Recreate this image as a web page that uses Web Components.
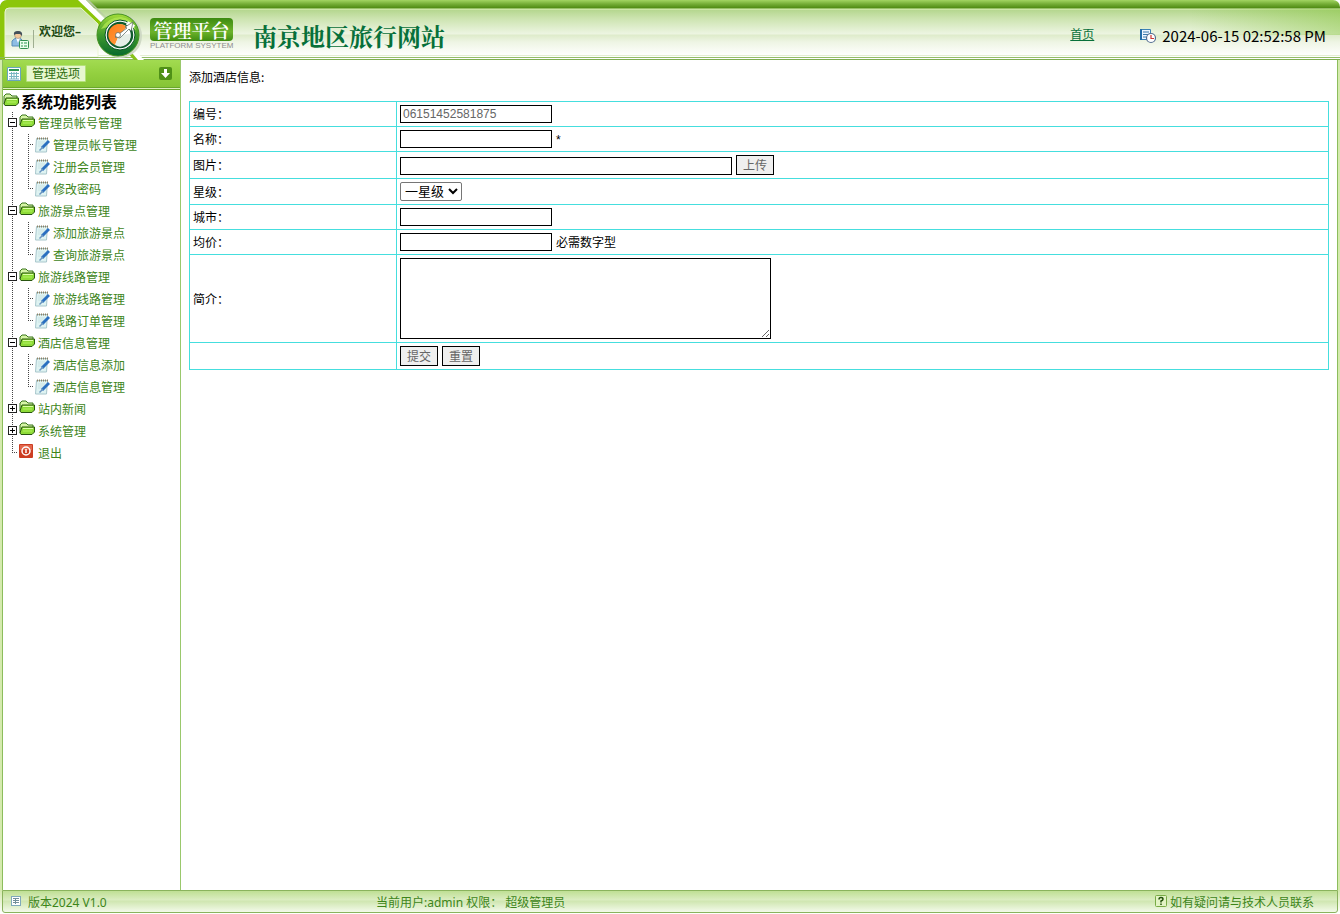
<!DOCTYPE html>
<html lang="zh-CN">
<head>
<meta charset="utf-8">
<title>南京地区旅行网站</title>
<style>
  html, body { margin: 0; height: 100%; }
  body {
    font: 12px/16px "Noto Sans", "Noto Sans CJK SC", sans-serif;
    color: #000;
    background: #fff;
    --leaf: #3d851a;
    --line: #8cbd5c;
    --rim: #d5eaae;
  }
</style>
</head>
<body>
<app-shell>
  <app-header slot="top" user="欢迎您–" heading="南京地区旅行网站" time="2024-06-15 02:52:58 PM"></app-header>
  <side-menu slot="side" heading="系统功能列表">
    <tree-group label="管理员帐号管理" open>
      <tree-item>管理员帐号管理</tree-item>
      <tree-item>注册会员管理</tree-item>
      <tree-item>修改密码</tree-item>
    </tree-group>
    <tree-group label="旅游景点管理" open>
      <tree-item>添加旅游景点</tree-item>
      <tree-item>查询旅游景点</tree-item>
    </tree-group>
    <tree-group label="旅游线路管理" open>
      <tree-item>旅游线路管理</tree-item>
      <tree-item>线路订单管理</tree-item>
    </tree-group>
    <tree-group label="酒店信息管理" open>
      <tree-item>酒店信息添加</tree-item>
      <tree-item>酒店信息管理</tree-item>
    </tree-group>
    <tree-group label="站内新闻"></tree-group>
    <tree-group label="系统管理"></tree-group>
    <tree-group label="退出" kind="exit"></tree-group>
  </side-menu>
  <hotel-form>添加酒店信息:</hotel-form>
  <app-footer slot="bottom">
    <span slot="version">版本2024 V1.0</span>
    <span slot="user">当前用户:admin 权限： 超级管理员</span>
    <span slot="help">如有疑问请与技术人员联系</span>
  </app-footer>
</app-shell>

<script>
const define = (name, markup, setup) => {
  const template = document.createElement('template');
  template.innerHTML = markup;
  customElements.define(name, class extends HTMLElement {
    constructor() {
      super();
      this.attachShadow({ mode: 'open' }).append(template.content.cloneNode(true));
    }
    connectedCallback() { if (setup) setup(this, this.shadowRoot); }
  });
};

define('app-shell', `
<style>
  :host { display: flex; flex-direction: column; min-height: 100vh; }
  .middle {
    flex: 1; display: flex;
    border: solid var(--rim); border-width: 0 2px;
  }
  .inner { flex: 1; display: flex; border: solid var(--line); border-width: 0 1px; }
  aside { flex: none; width: 177px; border-right: 1px solid #9ac86c; }
  main { flex: 1; padding: 9px 8px; }
</style>
<slot name="top"></slot>
<div class="middle"><div class="inner">
  <aside><slot name="side"></slot></aside>
  <main><slot></slot></main>
</div></div>
<slot name="bottom"></slot>`);

define('app-header', `
<style>
  :host { display: block; }
  header {
    display: flex; align-items: center; height: 60px; overflow: hidden;
    border-radius: 7px 7px 0 0;
    background:
      linear-gradient(#e3eed2, #e3eed2) 0 55px / 100% 1px no-repeat,
      linear-gradient(#94bd68, #94bd68) 0 57px / 100% 1px no-repeat,
      linear-gradient(#7fae50, #7fae50) 0 59px / 100% 1px no-repeat,
      linear-gradient(90deg, transparent calc(100% - 150px), rgba(130,195,55,.45)) 0 9px / 100% 26px no-repeat,
      linear-gradient(#a2d562 0, #74ad36 4px, #4f8b13 8px, #e0f5bd 9px, #b5d78f 10px, #cbe3ae 18px, #edf5e2 34px, #deebca 35px, #eef5e4 42px, #fdfefb 54px, #fff 60px);
  }
  .brand { display: grid; flex: none; width: 150px; height: 60px; }
  .brand > * { grid-area: 1 / 1; }
  .welcome { padding: 24px 0 0 39px; font-weight: 700; color: #1d4a12; }
  .badge { width: 83px; padding-top: 8px; text-align: center; }
  .badge b {
    display: block; height: 23px; border-radius: 4px; font: 600 19px/23px "Noto Serif CJK SC", "Noto Sans CJK SC", serif;
    color: #fff; background: linear-gradient(#3c8a10, #6cb32a 60%, #3f8d12);
  }
  .badge small { display: block; font: 8px/10px "Liberation Sans", sans-serif; color: #8d8d8d; white-space: nowrap; }
  h1 { flex: 1; margin: 12px 0 0 20px; font: 700 24px/36px "Noto Serif CJK SC", "Noto Sans CJK SC", serif; color: #07703a; }
  a { margin: 10px 46px 0 0; color: #07703a; }
  time { display: flex; align-items: center; gap: 6px; margin: 12px 14px 0 0; font: 15px/20px "Noto Sans CJK SC", sans-serif; }
  h1, a, .badge, time { white-space: nowrap; }
</style>
<header>
  <div class="brand">
    <svg width="150" height="60" viewBox="0 0 150 60" aria-hidden="true">
      <defs>
        <linearGradient id="panel" x2="0" y2="1">
          <stop offset="0" stop-color="#c0dc9b"/><stop offset=".54" stop-color="#e9f3dc"/>
          <stop offset=".56" stop-color="#dbe9c6"/><stop offset="1" stop-color="#fff"/>
        </linearGradient>
        <linearGradient id="ring" x2="0" y2="1"><stop offset="0" stop-color="#a2dc38"/><stop offset=".5" stop-color="#3f9a2c"/><stop offset="1" stop-color="#07692d"/></linearGradient>
        <linearGradient id="dial" x2="1" y2="1"><stop offset="0" stop-color="#ff7a16"/><stop offset="1" stop-color="#ffa24a"/></linearGradient>
      </defs>
      <path d="M0 60V7Q0 0 7 0H79L104 24 96 42H5V60Z" fill="#8cc60a"/>
      <path d="M5 57V12Q5 8 9 8H81L98 24V57Z" fill="url(#panel)" stroke="#eaf6d3"/>
      <path d="M78 0H86L112 26H105Z" fill="#fff"/><path d="M86 0H89L114 25" fill="#b7c7a5"/>
      <path d="M125 45H131L144 60H137Z" fill="#fff"/><path d="M122 47H127L138 60H134Z" fill="#88c21b"/>
      <circle cx="120" cy="36" r="22" fill="#cfd9c5"/>
      <circle cx="118" cy="35" r="21" fill="url(#ring)" stroke="#459321"/>
      <path d="M101 29Q108 17 121 17 132 18 136 30 118 22 101 29Z" fill="#b3e853" opacity=".75"/>
      <circle cx="120" cy="35" r="15" fill="#fff" stroke="#075325"/>
      <circle cx="120" cy="35" r="12" fill="#fff" stroke="#105b2d" stroke-width="2.500"/>
      <path d="M119 35 127 27A11 11 0 1 0 115 45Z" fill="url(#dial)"/>
      <path d="M119 35 130 34A10 10 0 0 1 115 45Z" fill="#e5eee7"/>
      <path d="M127 23 134 27" stroke="#fff" stroke-width="4"/>
      <path d="M115 37 127 28 125 27 133 22 131 31 129 29 120 38Z" fill="#fff" stroke="#51615a" stroke-width=".7"/>
      <circle cx="118" cy="35" r="2.500" fill="#fff" stroke="#59615d" stroke-width=".7"/>
      <path d="M12 46V41Q14 38 18 38 22 38 23 42V46Z" fill="#8dbde4" stroke="#5a8db7"/>
      <path d="M16 38 18 43 20 38" fill="#fff"/>
      <circle cx="18" cy="35" r="3.500" fill="#f3c89b" stroke="#777" stroke-width=".5"/>
      <path d="M14 35Q13 31 18 31 23 31 22 36L20 34H16Z" fill="#43505a"/>
      <rect x="19.500" y="40.500" width="9" height="8" rx="1" fill="#eaffed" stroke="#319150"/>
      <path d="M21 43H23M24 43H27M21 46H23M24 46H27" stroke="#2d9550"/>
      <path d="M33.500 30V48" stroke="#9fae91"/>
      <path d="M0 57.500H98M0 59.500H134" stroke="#8bb65c"/>
    </svg>
    <span class="welcome"></span>
  </div>
  <div class="badge"><b>管理平台</b><small>PLATFORM SYSYTEM</small></div>
  <h1></h1>
  <a href="#home">首页</a>
  <time>
    <svg width="16" height="16" viewBox="0 0 16 16" aria-hidden="true">
      <path d="M1 1.500H10.500V11.500H1Z" fill="#eff7ff" stroke="#3b82b5"/>
      <path d="M1 1V12" stroke="#236ca8" stroke-width="2"/>
      <path d="M3 4H9M3 6.500H8M3 9H6" stroke="#3b7aad"/>
      <circle cx="11" cy="10" r="4.500" fill="#fff" stroke="#536d91" stroke-width="1.200"/>
      <path d="M11 7V10.500H14" fill="none" stroke="#c33" stroke-width="1.200"/>
    </svg>
    <span></span>
  </time>
</header>`, (host, root) => {
  root.querySelector('.welcome').textContent = host.getAttribute('user');
  root.querySelector('h1').textContent = host.getAttribute('heading');
  root.querySelector('time span').textContent = host.getAttribute('time');
});

const folder = `
<svg width="16" height="14" viewBox="0 0 16 14" aria-hidden="true">
  <path d="M1 11V3L3 1H7L9 3H14V6" fill="#d6f5a6" stroke="#39741a"/>
  <path d="M1 11 3 5H15.500V10L13 12.500H2Z" fill="#8edb38" stroke="#28540f"/>
  <path d="M4 6.500H14" stroke="#dcffa5"/><path d="M4 9H13" stroke="#b3f35f"/>
</svg>`;

define('side-menu', `
<style>
  :host { display: block; }
  .bar {
    display: flex; align-items: center; height: 27px; padding: 0 8px 0 4px; box-sizing: border-box;
    background: linear-gradient(#a2db51, #93d03f 50%, #86c436);
  }
  .bar span {
    flex: none; margin: 0 auto 0 5px; padding: 0 5px; border: 1px solid #b5e27a; border-radius: 1px;
    line-height: 15px; color: #2f6e10; background: #e7f7cf;
  }
  .rule { height: 1px; border: solid; border-width: 1px 0; border-color: #6aa52d #a5d36c; background: #dff2bd; margin-bottom: 1px; }
  h2 { display: flex; align-items: center; gap: 2px; height: 21px; margin: 0; font: 700 16px/21px "Noto Sans CJK SC", sans-serif; }
  h2 svg { margin-bottom: 4px; }
  nav { padding-left: 5px; }
  button { display: flex; padding: 0; border: 0; background: none; }
</style>
<div class="bar">
  <svg width="14" height="14" viewBox="0 0 14 14" aria-hidden="true">
    <path d="M.500.500H13.500V13.500H.500Z" fill="#fff" stroke="#69a6bd"/>
    <path d="M2 2H12V4H2Z" fill="#2b9553"/>
    <path d="M2 6.500H12M2 9.500H12M2 12H12M4.500 5V12M7 5V12M9.500 5V12" stroke="#79b7c2"/>
  </svg>
  <span>管理选项</span>
  <button type="button" aria-label="展开">
    <svg width="13" height="13" viewBox="0 0 13 13">
      <rect width="13" height="13" rx="2" fill="#4f9017"/>
      <path d="M5 2H8V6H11L6.500 11 2 6H5Z" fill="#fff"/>
    </svg>
  </button>
</div>
<div class="rule"></div>
<h2>${folder}<span></span></h2>
<nav><slot></slot></nav>`, (host, root) => {
  root.querySelector('h2 span').textContent = host.getAttribute('heading');
});

define('tree-group', `
<style>
  :host {
    display: block;
    background: repeating-linear-gradient(#444 0 1px, transparent 1px 2px) 4px 0 / 1px 100% no-repeat;
  }
  :host(:last-child) { background-size: 1px 11px; }
  .row { display: flex; align-items: center; height: 22px; }
  .box { margin: 0 2px 2px 0; }
  a { display: flex; align-items: center; gap: 3px; color: var(--leaf); text-decoration: none; }
  a svg { margin-bottom: 4px; }
  .text { padding-top: 2px; }
  .exit, :host([kind=exit]) .folder { display: none; }
  :host([kind=exit]) .exit { display: block; }
  .icon { display: contents; }
  :host([kind=exit]) .box path, :host([kind=exit]) .box rect { display: none; }
  :host([kind=exit]) .box .stub { display: block; }
  .stub { display: none; }
  :host([open]) .plus { display: none; }
  .kids { display: block; padding-left: 20px; }
</style>
<div class="row">
  <svg class="box" width="9" height="11" viewBox="0 0 9 11" aria-hidden="true">
    <rect x=".500" y="1.500" width="8" height="8" fill="#fff" stroke="#222"/>
    <path d="M2 5.500H7" stroke="#000"/><path class="plus" d="M4.500 3V8" stroke="#000"/>
    <path class="stub" d="M4 5.500H9" stroke="#444" stroke-dasharray="1"/>
  </svg>
  <a href="#menu">
    <span class="icon folder">${folder}</span>
    <svg class="exit" width="16" height="14" viewBox="0 0 16 14" aria-hidden="true">
      <rect width="14" height="14" rx="1" fill="#cc3d22"/><path d="M1 1H13V6H1Z" fill="#e2674c"/>
      <circle cx="7" cy="7" r="4" fill="none" stroke="#fff" stroke-width="1.500"/><path d="M7 5V9" stroke="#fff" stroke-width="1.500"/>
    </svg>
    <span class="text"></span>
  </a>
</div>
<div class="kids"><slot></slot></div>`, (host, root) => {
  root.querySelector('.text').textContent = host.getAttribute('label');
});

define('tree-item', `
<style>
  :host {
    display: flex; align-items: center; height: 22px;
    background:
      repeating-linear-gradient(#444 0 1px, transparent 1px 2px) 0 0 / 1px 100% no-repeat,
      repeating-linear-gradient(90deg, #444 0 1px, transparent 1px 2px) 0 10px / 6px 1px no-repeat;
  }
  :host(:last-child) { background-size: 1px 11px, 6px 1px; }
  a { display: flex; align-items: center; gap: 3px; margin-left: 7px; color: var(--leaf); text-decoration: none; }
  span { padding-top: 2px; }
</style>
<a href="#item">
  <svg width="15" height="16" viewBox="0 0 15 16" aria-hidden="true">
    <path d="M1.500 1.500H12.500L11.500 15H.500Z" fill="#dff3f2" stroke="#a8c6cc"/>
    <path d="M2 1.500H13" stroke="#8d8063" stroke-width="2" stroke-dasharray="1"/>
    <path d="M3 5H10M3 7H9M3 9H8" stroke="#cbe3e5"/>
    <path d="M14 4 7 11" stroke="#2a6fc0" stroke-width="3"/>
    <path d="M8 10 4.500 13.500" stroke="#6993be" stroke-width="1.500"/>
  </svg>
  <span><slot></slot></span>
</a>`);

define('hotel-form', `
<style>
  :host { display: block; }
  p { margin: 0 0 16px; font: 12px/16px "Noto Sans CJK SC", sans-serif; }
  table { width: 100%; border-collapse: collapse; table-layout: fixed; }
  th, td { border: 1px solid #45dede; padding: 3px; text-align: left; font-weight: 400; line-height: 16px; }
  th { width: 200px; padding: 4px 3px 2px; }
  .field { display: flex; align-items: flex-end; gap: 4px; }
  .field span { font-family: "Liberation Sans", "Noto Sans CJK SC", sans-serif; }
  input, textarea, button {
    box-sizing: border-box; margin: 0; border: 1px solid #000; border-radius: 0;
    font: 12px/16px "Liberation Sans", "Noto Sans CJK SC", sans-serif; color: #666;
  }
  input { width: 152px; height: 18px; padding: 1px 2px; background: #fff; }
  #picture { width: 332px; }
  button { width: 38px; height: 20px; padding: 2px 0 0; background: #efefef; }
  select { width: 62px; height: 19px; margin: 0; padding: 0; font: 13px "Liberation Sans", "Noto Sans CJK SC", sans-serif; border: 1px solid #767676; border-radius: 2px; color: #000; background: #fff; }
  textarea { width: 371px; height: 81px; }
</style>
<form>
  <p><slot></slot></p>
  <table>
    <tr><th><label for="code">编号：</label></th><td><div class="field"><input id="code" value="06151452581875"></div></td></tr>
    <tr><th><label for="name">名称：</label></th><td><div class="field"><input id="name"><span>*</span></div></td></tr>
    <tr><th><label for="picture">图片：</label></th><td><div class="field"><input id="picture"><button type="button">上传</button></div></td></tr>
    <tr><th><label for="star">星级：</label></th><td><div class="field"><select id="star"><option>一星级</option><option>二星级</option><option>三星级</option><option>四星级</option><option>五星级</option></select></div></td></tr>
    <tr><th><label for="city">城市：</label></th><td><div class="field"><input id="city"></div></td></tr>
    <tr><th><label for="price">均价：</label></th><td><div class="field"><input id="price"><span>必需数字型</span></div></td></tr>
    <tr><th><label for="intro">简介：</label></th><td><div class="field"><textarea id="intro"></textarea></div></td></tr>
    <tr><th></th><td><div class="field"><button type="submit">提交</button><button type="reset">重置</button></div></td></tr>
  </table>
</form>`);

define('app-footer', `
<style>
  :host { display: block; padding: 0 2px 1px; background: linear-gradient(var(--rim), #fff); }
  footer {
    display: grid; grid-template-columns: 373px 1fr auto; align-items: center; height: 23px; box-sizing: border-box;
    padding: 0 23px 0 0; border: 1px solid #8ab35d; border-radius: 0 0 3px 3px; color: var(--leaf);
    background: linear-gradient(#bfdf94 0, #dbedc2 9px, #cfe6b0 10px, #f3faea 21px);
  }
  div { display: flex; align-items: center; gap: 7px; padding-top: 2px; white-space: nowrap; }
  .version { padding-left: 8px; }
  .help { gap: 3px; }
  svg { margin-bottom: 4px; }
</style>
<footer>
  <div class="version">
    <svg width="10" height="10" viewBox="0 0 10 10" aria-hidden="true">
      <rect x=".500" y=".500" width="9" height="9" fill="#fff" stroke="#7fa9bb"/>
      <path d="M2 2.500H8M2 4.500H8M2 6.500H8M4.500 2V8" stroke="#728f9b"/>
    </svg>
    <slot name="version"></slot>
  </div>
  <div><slot name="user"></slot></div>
  <div class="help">
    <svg width="12" height="12" viewBox="0 0 12 12" aria-hidden="true">
      <rect x=".500" y=".500" width="11" height="11" rx="1" fill="#e2f3c4" stroke="#78ab45"/>
      <path d="M4 4.500Q4 2.500 6 2.500 8 2.500 8 4.200 8 5.200 6 6V7.500M6 8.500V10" fill="none" stroke="#24510c" stroke-width="1.500"/>
    </svg>
    <slot name="help"></slot>
  </div>
</footer>`);
</script>
</body>
</html>
